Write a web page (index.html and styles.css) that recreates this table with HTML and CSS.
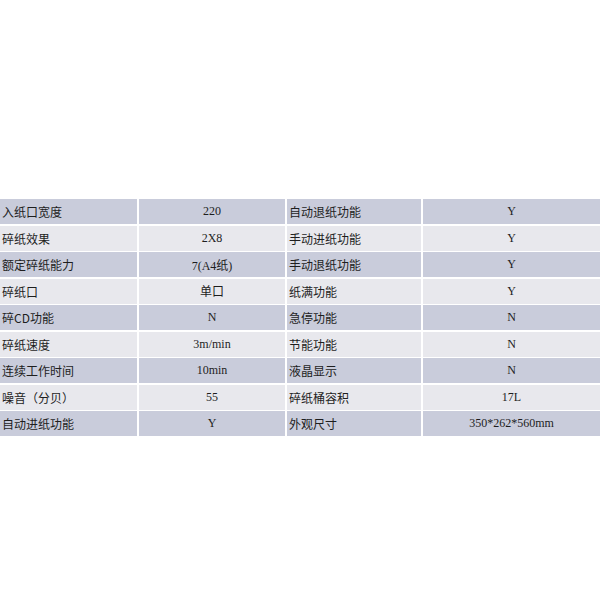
FILE: index.html
```html
<!DOCTYPE html>
<html>
<head>
<meta charset="utf-8">
<link rel="stylesheet" href="styles.css">
</head>
<body>
<div class="page">
  <div class="spec">
    <div class="cell odd label">入纸口宽度</div><div class="cell odd val">220</div><div class="cell odd label">自动退纸功能</div><div class="cell odd val">Y</div>
    <div class="cell even label">碎纸效果</div><div class="cell even val">2X8</div><div class="cell even label">手动进纸功能</div><div class="cell even val">Y</div>
    <div class="cell odd label">额定碎纸能力</div><div class="cell odd val">7(A4纸)</div><div class="cell odd label">手动退纸功能</div><div class="cell odd val">Y</div>
    <div class="cell even label">碎纸口</div><div class="cell even val">单口</div><div class="cell even label">纸满功能</div><div class="cell even val">Y</div>
    <div class="cell odd label">碎CD功能</div><div class="cell odd val">N</div><div class="cell odd label">急停功能</div><div class="cell odd val">N</div>
    <div class="cell even label">碎纸速度</div><div class="cell even val">3m/min</div><div class="cell even label">节能功能</div><div class="cell even val">N</div>
    <div class="cell odd label">连续工作时间</div><div class="cell odd val">10min</div><div class="cell odd label">液晶显示</div><div class="cell odd val">N</div>
    <div class="cell even label">噪音（分贝）</div><div class="cell even val">55</div><div class="cell even label">碎纸桶容积</div><div class="cell even val">17L</div>
    <div class="cell odd label">自动进纸功能</div><div class="cell odd val">Y</div><div class="cell odd label">外观尺寸</div><div class="cell odd val">350*262*560mm</div>
  </div>
</div>
</body>
</html>
```
FILE: styles.css
```css
html, body {
  margin: 0;
  padding: 0;
  background: #ffffff;
}
.page {
  width: 600px;
  height: 600px;
  padding-top: 199px;
  box-sizing: border-box;
}
.spec {
  display: grid;
  grid-template-columns: 137px 146px 134px 1fr;
  grid-auto-rows: 25px;
  column-gap: 2px;
  row-gap: 1.5px;
  color: #1e1e1e;
  font-family: "Liberation Serif", "Noto Sans CJK SC", serif;
  font-size: 12px;
}
.cell {
  display: flex;
  align-items: center;
  white-space: nowrap;
}
.odd {
  background: #c9ccdb;
}
.even {
  background: #e8e8ed;
}
.label {
  padding-left: 2px;
  font-family: "Noto Sans CJK SC", sans-serif;
  font-size: 12px;
}
.val {
  justify-content: center;
}
```
